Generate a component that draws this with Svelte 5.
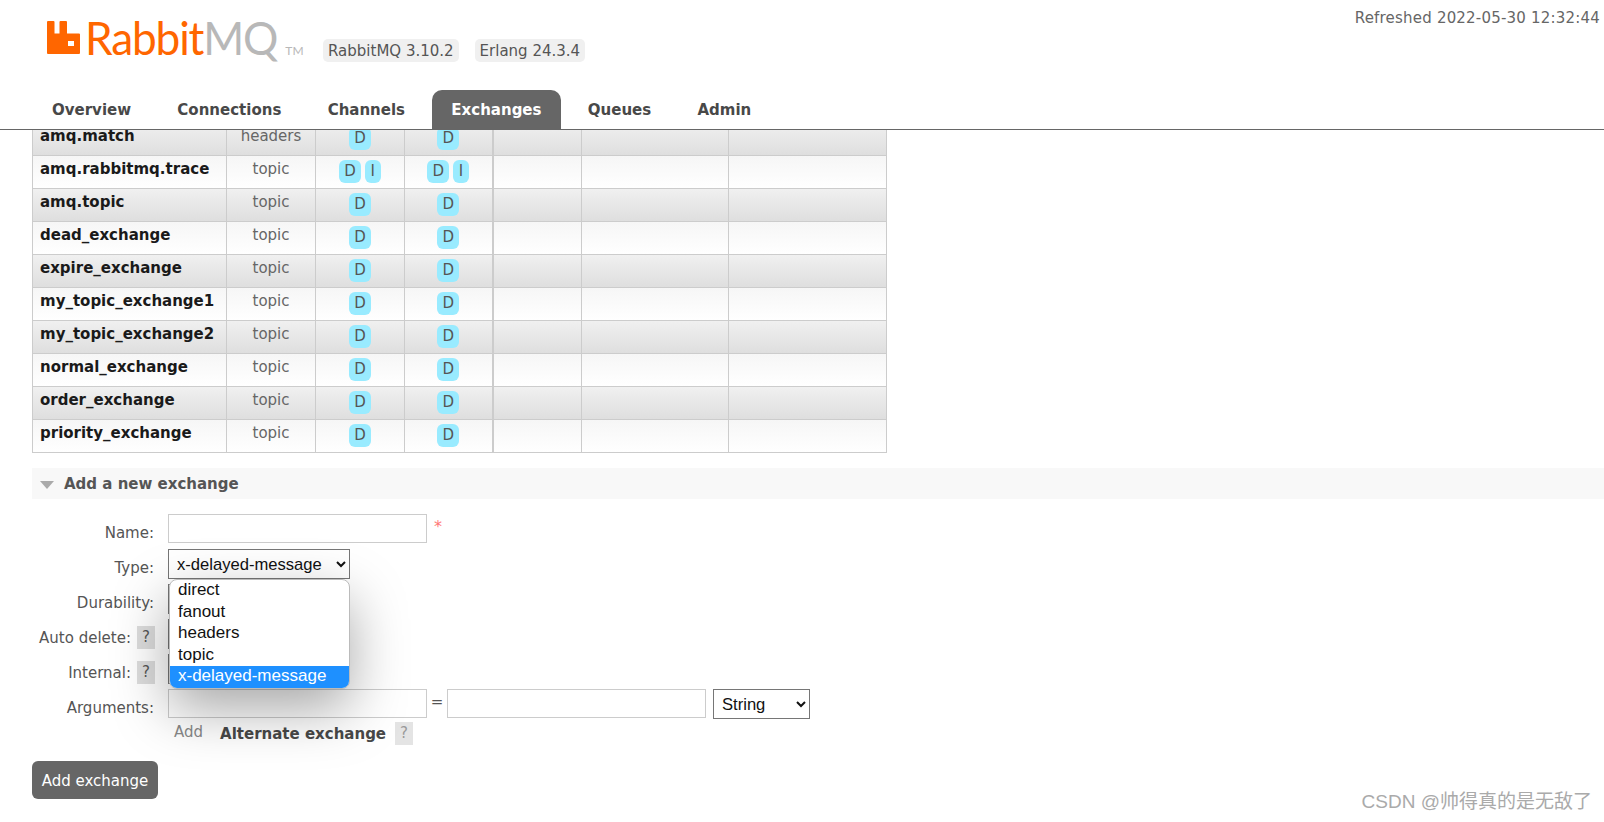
<script>
  const tabs = ['Overview', 'Connections', 'Channels', 'Exchanges', 'Queues', 'Admin'];
  const rows = [
    { name: 'amq.match', type: 'headers', flags: ['D'] },
    { name: 'amq.rabbitmq.trace', type: 'topic', flags: ['D', 'I'] },
    { name: 'amq.topic', type: 'topic', flags: ['D'] },
    { name: 'dead_exchange', type: 'topic', flags: ['D'] },
    { name: 'expire_exchange', type: 'topic', flags: ['D'] },
    { name: 'my_topic_exchange1', type: 'topic', flags: ['D'] },
    { name: 'my_topic_exchange2', type: 'topic', flags: ['D'] },
    { name: 'normal_exchange', type: 'topic', flags: ['D'] },
    { name: 'order_exchange', type: 'topic', flags: ['D'] },
    { name: 'priority_exchange', type: 'topic', flags: ['D'] }
  ];
  const types = ['direct', 'fanout', 'headers', 'topic', 'x-delayed-message'];
</script>

<div class="page">
  <header class="top">
    <div class="logo">
      <svg class="mark" viewBox="0 0 33 33" width="33" height="33" aria-hidden="true">
        <path fill-rule="evenodd" fill="#ff6600" d="M1 0H6.5Q7.5 0 7.5 1V12.5H12.5V1Q12.5 0 13.500 0H19Q20 0 20 1V12.500H32Q33 12.500 33 13.500V32Q33 33 32 33H1Q0 33 0 32V1Q0 0 1 0ZM21 20V25H27V20Z" />
      </svg>
      <span class="word"><span class="rabbit">Rabbit</span><span class="mq">MQ</span></span><span class="tm">TM</span>
    </div>
    <div class="versions">
      <span class="pill">RabbitMQ 3.10.2</span>
      <span class="pill">Erlang 24.3.4</span>
    </div>
    <div class="refreshed">Refreshed 2022-05-30 12:32:44</div>
  </header>

  <nav class="tabs">
    {#each tabs as tab}
      <a class="tab" class:active={tab === 'Exchanges'} href="#{tab}">{tab}</a>
    {/each}
  </nav>

  <main class="main">
    <table class="list">
      <colgroup>
        <col style="width:194px" /><col style="width:89px" /><col style="width:89px" /><col style="width:88px" />
        <col style="width:89px" /><col style="width:147px" /><col style="width:158px" />
      </colgroup>
      <tbody>
        {#each rows as row, i}
          <tr class={i % 2 ? 'alt2' : 'alt1'}>
            <td class="name">{row.name}</td>
            <td class="center">{row.type}</td>
            <td class="center">
              {#each row.flags as f}<abbr class="badge">{f}</abbr>{/each}
            </td>
            <td class="center sep">
              {#each row.flags as f}<abbr class="badge">{f}</abbr>{/each}
            </td>
            <td></td><td></td><td></td>
          </tr>
        {/each}
      </tbody>
    </table>

    <h2 class="section"><i class="arrow"></i>Add a new exchange</h2>

    <form class="form">
      <div class="row">
        <span class="label">Name:</span>
        <input class="text" type="text" />
        <span class="star">*</span>
      </div>
      <div class="row type-row">
        <span class="label">Type:</span>
        <select class="sel type">
          {#each types as t}<option selected={t === 'x-delayed-message'}>{t}</option>{/each}
        </select>
        <div class="dropdown">
          {#each types as t}
            <div class="opt" class:picked={t === 'x-delayed-message'}>{t}</div>
          {/each}
        </div>
      </div>
      <div class="row">
        <span class="label">Durability:</span>
        <select class="sel small"><option>Durable</option></select>
      </div>
      <div class="row">
        <span class="label">Auto delete:<b class="help">?</b></span>
        <select class="sel small"><option>No</option></select>
      </div>
      <div class="row">
        <span class="label">Internal:<b class="help">?</b></span>
        <select class="sel small"><option>No</option></select>
      </div>
      <div class="row">
        <span class="label">Arguments:</span>
        <input class="text" type="text" />
        <span class="eq">=</span>
        <input class="text" type="text" />
        <select class="sel string"><option>String</option></select>
      </div>
      <div class="extras">
        <span class="add">Add</span>
        <span class="alt">Alternate exchange</span>
        <b class="help faded">?</b>
      </div>
      <button class="submit" type="button">Add exchange</button>
    </form>
  </main>

  <div class="watermark">CSDN @帅得真的是无敌了</div>
</div>

<style>
  :global(body) {
    margin: 0;
    background: #fff;
  }
  .page {
    position: relative;
    height: 822px;
    overflow: hidden;
    display: flex;
    flex-direction: column;
    font-family: "DejaVu Sans", Verdana, sans-serif;
    font-size: 15px;
    color: #484848;
  }
  .top {
    height: 90px;
    display: flex;
    align-items: flex-start;
    flex: none;
  }
  .logo {
    display: flex;
    align-items: flex-start;
    margin: 21px 0 0 47px;
    width: 276px;
    height: 40px;
    font-family: Lato, sans-serif;
    font-weight: 400;
    font-size: 46px;
    line-height: 33px;
    letter-spacing: -1.2px;
  }
  .mark {
    flex: none;
    margin-right: 5px;
  }
  .word {
    display: block;
    transform: scaleX(0.96);
    transform-origin: left;
    margin-right: -8px;
  }
  .rabbit {
    color: #ff6600;
  }
  .mq {
    color: #b8b8b8;
  }
  .tm {
    font-size: 12px;
    line-height: 11px;
    margin: 24px 0 0 8px;
    letter-spacing: 0;
    color: #b8b8b8;
    font-weight: 400;
  }
  .versions {
    display: flex;
    gap: 16px;
    margin-top: 39px;
  }
  .pill {
    background: #f0f0f0;
    border-radius: 5px;
    height: 23px;
    line-height: 25px;
    padding: 0 5px;
    color: #555;
  }
  .refreshed {
    margin: 10px 4px 0 auto;
    color: #666;
    line-height: 17px;
    letter-spacing: 0.2px;
  }
  .tabs {
    display: flex;
    flex: none;
    height: 39px;
    padding-left: 32.5px;
    gap: 7.3px;
    border-bottom: 1px solid #666;
  }
  .tab {
    padding: 0 19.5px;
    line-height: 41px;
    font-weight: bold;
    color: #484848;
    text-decoration: none;
    border-radius: 10px 10px 0 0;
  }
  .tab.active {
    background: #666;
    color: #fff;
  }
  .main {
    flex: 1;
    min-height: 0;
    overflow: hidden;
    padding-left: 32px;
  }
  .list {
    table-layout: fixed;
    width: 854px;
    margin-top: -8px;
    border-collapse: collapse;
    border-left: 1px solid #ccc;
  }
  .list td {
    height: 32px;
    padding: 0;
    border: 1px solid #ccc;
    box-sizing: content-box;
    vertical-align: top;
    line-height: 26px;
  }
  .alt1 {
    background: linear-gradient(to bottom, #f0f0f0, #dedede);
  }
  .alt2 {
    background: linear-gradient(to bottom, #f6f6f6, #fff);
  }
  .name {
    padding-left: 7px !important;
    font-weight: bold;
    color: #1a1a1a;
    white-space: nowrap;
  }
  .center {
    text-align: center;
    color: #666;
  }
  .sep {
    border-right: 2px solid #ccc !important;
  }
  .badge {
    display: inline-block;
    box-sizing: border-box;
    min-width: 16px;
    height: 23px;
    line-height: 23px;
    margin: 4px 2px 0;
    padding: 0 5px;
    border-radius: 6px;
    background: #99ebff;
    color: #555;
    vertical-align: top;
  }
  .section {
    margin: 15px 0 0;
    height: 31px;
    display: flex;
    align-items: center;
    background: #f8f8f8;
    font-size: 15px;
    font-weight: bold;
    color: #555;
  }
  .arrow {
    width: 0;
    height: 0;
    margin: 2px 10px 0 8px;
    border: 7px solid transparent;
    border-top: 8px solid #aaa;
    border-bottom: 0;
  }
  .form {
    padding-top: 15px;
  }
  .row {
    position: relative;
    display: flex;
    align-items: flex-start;
    height: 35px;
  }
  .label {
    width: 122px;
    margin-right: 14px;
    padding-top: 10px;
    display: flex;
    justify-content: flex-end;
    line-height: 18px;
    color: #555;
    white-space: nowrap;
  }
  .label:has(.help) {
    width: 123px;
    margin-right: 13px;
  }
  .help {
    display: inline-block;
    flex: none;
    width: 18px;
    height: 23px;
    line-height: 23px;
    margin: -3px 0 0 6px;
    text-align: center;
    background: #ddd;
    color: #555;
    font-weight: normal;
  }
  .text {
    box-sizing: border-box;
    width: 259px;
    height: 29px;
    margin: 0;
    border: 1px solid #ccc;
    background: #fff;
    border-radius: 0;
    outline: none;
  }
  .star {
    margin: 3px 0 0 7px;
    color: #f77;
    font-size: 16px;
  }
  .eq {
    width: 20px;
    text-align: center;
    line-height: 26px;
    color: #555;
  }
  .sel {
    box-sizing: border-box;
    margin: 0;
    height: 30px;
    padding-left: 4px;
    background: #fff;
    font-family: "Liberation Sans", Arial, sans-serif;
    font-size: 16.6px;
    color: #111;
  }
  .type {
    width: 182px;
  }
  .small {
    width: 100px;
  }
  .string {
    width: 97px;
    margin-left: 7px;
  }
  .dropdown {
    position: absolute;
    z-index: 2;
    left: 137px;
    top: 30px;
    box-sizing: border-box;
    width: 181px;
    height: 110px;
    overflow: hidden;
    background: #fff;
    border: 1px solid #bbb;
    border-radius: 8px;
    box-shadow: 0 20px 55px rgba(0, 0, 0, 0.35);
    font-family: "Liberation Sans", Arial, sans-serif;
    font-size: 17px;
    color: #111;
  }
  .opt {
    height: 21.5px;
    line-height: 20px;
    padding-left: 8px;
  }
  .opt.picked {
    background: #1e90ff;
    color: #fff;
  }
  .extras {
    display: flex;
    align-items: flex-start;
    height: 37px;
    padding-left: 142px;
  }
  .add {
    color: #888;
    line-height: 16px;
  }
  .alt {
    margin-left: 17px;
    font-weight: bold;
    color: #484848;
    line-height: 20px;
  }
  .help.faded {
    margin: -2px 0 0 9px;
    background: #e4e4e4;
    color: #999;
  }
  .submit {
    display: block;
    box-sizing: border-box;
    width: 126px;
    height: 38px;
    padding: 2px 0 0;
    border: 0;
    border-radius: 6px;
    background: #666;
    color: #fff;
    font: inherit;
  }
  .watermark {
    position: absolute;
    right: 12px;
    bottom: 7px;
    font-family: "Liberation Sans", "Noto Sans CJK SC", sans-serif;
    font-size: 19px;
    line-height: 26px;
    color: #aaa;
  }
</style>
